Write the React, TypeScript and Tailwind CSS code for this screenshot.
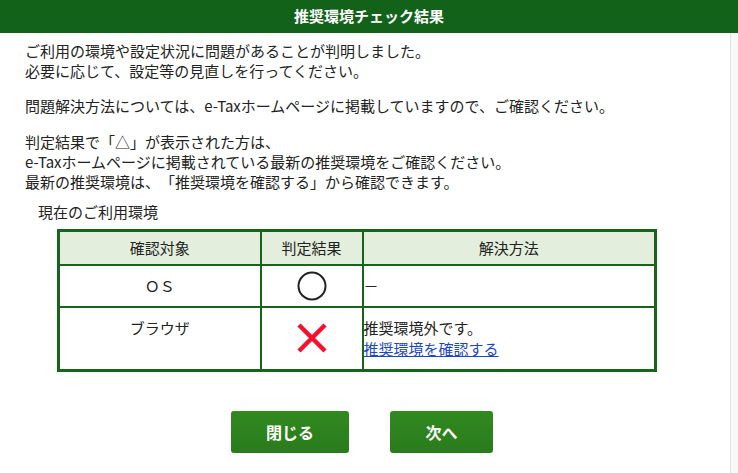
const font = { fontFamily: '"Noto Sans CJK JP", "Noto Sans", sans-serif' };

function Circle() {
  return (
    <svg width="30" height="30" viewBox="0 0 30 30" className="mx-auto block">
      <circle cx="15" cy="15" r="13.5" fill="none" stroke="#222" strokeWidth="2" />
    </svg>
  );
}

function Cross() {
  return (
    <svg width="32" height="32" viewBox="0 0 32 32" className="mx-auto block">
      <path d="M3 3 L29 29 M29 3 L3 29" stroke="#f5102c" strokeWidth="4.5" strokeLinecap="butt" />
    </svg>
  );
}

export default function App() {
  return (
    <div className="flex h-screen flex-col bg-white text-[#222] [text-spacing-trim:space-all]" style={font}>
      <div className="flex h-[33px] items-center justify-center bg-[#12621a] text-[15px] font-bold text-white">
        推奨環境チェック結果
      </div>
      <div className="flex flex-1">
        <div className="flex-1 pt-[8px]">
          <div className="px-[25px] text-[15px] leading-[20px]">
            <p className="mb-[15px]">
              ご利用の環境や設定状況に問題があることが判明しました。
              <br />
              必要に応じて、設定等の見直しを行ってください。
            </p>
            <p className="mb-[16px]">問題解決方法については、e-Taxホームページに掲載していますので、ご確認ください。</p>
            <p className="mb-[10px]">
              判定結果で「△」が表示された方は、
              <br />
              e-Taxホームページに掲載されている最新の推奨環境をご確認ください。
              <br />
              最新の推奨環境は、「推奨環境を確認する」から確認できます。
            </p>
            <p className="pl-[13px]">現在のご利用環境</p>
          </div>

          <table className="mt-[7px] ml-[57px] w-[600px] border-collapse border-[3px] border-[#17651b] text-[15px] leading-[21px]">
            <thead>
              <tr className="h-[34px] bg-[#e3efdc]">
                <th className="w-[202px] border-2 border-[#17651b] font-normal">確認対象</th>
                <th className="w-[102px] border-2 border-[#17651b] font-normal">判定結果</th>
                <th className="border-2 border-[#17651b] font-normal">解決方法</th>
              </tr>
            </thead>
            <tbody>
              <tr className="h-[42px]">
                <td className="border-2 border-[#17651b] text-center">ＯＳ</td>
                <td className="border-2 border-[#17651b]">
                  <Circle />
                </td>
                <td className="border-2 border-[#17651b] text-left">－</td>
              </tr>
              <tr className="h-[64px]">
                <td className="border-2 border-[#17651b] pt-[9px] text-center align-top">ブラウザ</td>
                <td className="border-2 border-[#17651b]">
                  <Cross />
                </td>
                <td className="border-2 border-[#17651b]">
                  推奨環境外です。
                  <br />
                  <a href="#" className="text-[#1a47c6] underline">
                    推奨環境を確認する
                  </a>
                </td>
              </tr>
            </tbody>
          </table>

          <div className="mt-[39px] flex justify-center gap-[41px] pr-[6px]">
            <button className="h-[42px] w-[118px] rounded-[3px] bg-gradient-to-b from-[#31891f] to-[#2a7b1c] text-[16px] font-bold text-white">
              閉じる
            </button>
            <button className="h-[42px] w-[103px] rounded-[3px] bg-gradient-to-b from-[#31891f] to-[#2a7b1c] text-[16px] font-bold text-white">
              次へ
            </button>
          </div>
        </div>
        <div className="w-[8px] border-l border-[#e4e4e4] bg-[#f8f8f8]" />
      </div>
    </div>
  );
}
